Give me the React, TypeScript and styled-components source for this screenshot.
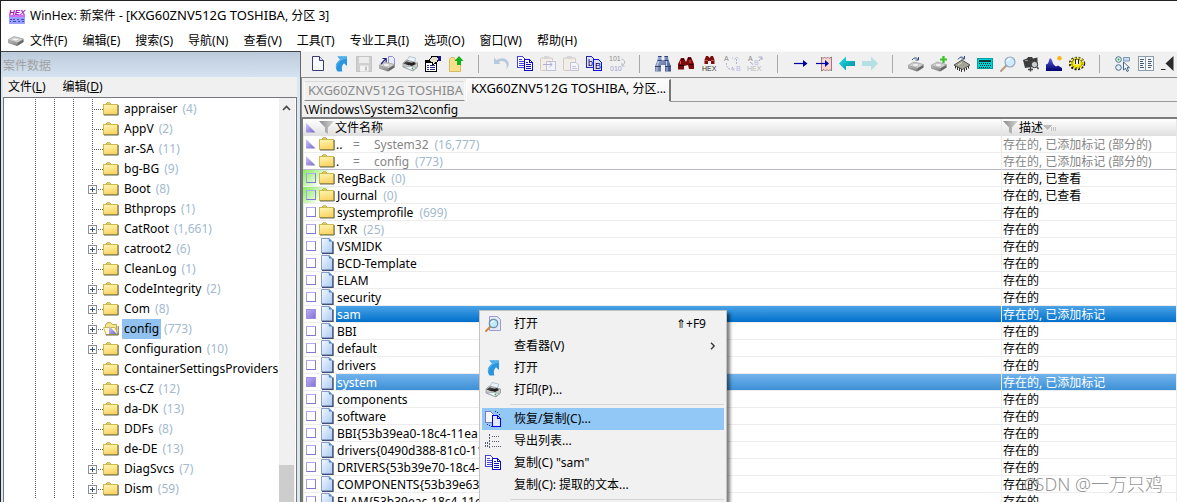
import React from "react";
import styled, { createGlobalStyle, css } from "styled-components";

const GlobalStyle = createGlobalStyle`
  *, *::before, *::after { box-sizing: border-box; }
  body { margin: 0; overflow: hidden; background: #f0f0f0; }
  body, button, table {
    font-family: "Noto Sans", "Noto Sans CJK SC", sans-serif;
    font-size: 12px;
    line-height: 16px;
    color: #000;
  }
  svg { display: block; flex: none; overflow: visible; }
`;

/* ---------- window frame ---------- */

const Window = styled.div`
  position: relative;
  display: flex;
  flex-direction: column;
  height: 100vh;
  overflow: hidden;
  border-top: 1px solid #222;
  border-left: 1px solid #222;
  background: #f0f0f0;
  white-space: nowrap;
`;

const TitleBar = styled.header`
  display: flex;
  align-items: center;
  gap: 5px;
  height: 29px;
  padding-left: 8px;
  background: #fff;
`;

const Title = styled.h1`
  margin: 0;
  font-size: 12px;
  font-weight: 400;
`;

const Drive = styled.span`
  font-size: 13px;
`;

const MenuBar = styled.nav`
  display: flex;
  align-items: center;
  height: 21px;
  padding-left: 7px;
  background: #fff;
`;

const MenuButtons = styled.div`
  display: flex;
  gap: 15px;
  padding-left: 5px;
`;

const TextButton = styled.button`
  padding: 0;
  border: 0;
  background: none;
`;

const Body = styled.div`
  display: flex;
  flex: 1;
  min-height: 0;
`;

/* ---------- case data panel ---------- */

const CasePanel = styled.aside`
  display: flex;
  flex-direction: column;
  flex: none;
  width: 300px;
  padding: 0 3px 0 2px;
  border-top: 1px solid #444;
  border-right: 1px solid #666;
  background: #dbe6f3;
`;

const Caption = styled.h2`
  flex: none;
  height: 25px;
  margin: 0 -3px 0 -2px;
  padding: 6px 0 0 2px;
  font-size: 12px;
  font-weight: 400;
  color: #a2a2a2;
  background: linear-gradient(#bccbdb, #d5e2f2);
`;

const PanelMenu = styled.nav`
  display: flex;
  flex: none;
  align-items: center;
  gap: 17px;
  height: 20px;
  padding-left: 5px;
  background: #f0f0f0;
`;

const TreeFrame = styled.div`
  display: flex;
  flex: 1;
  min-height: 0;
  border: solid #74777c;
  border-width: 1px 1px 0 1px;
  background: #fff;
`;

const Tree = styled.ul`
  flex: 1;
  min-width: 0;
  margin: 0;
  padding: 1px 0 0 31px;
  overflow: hidden;
  list-style: none;
`;

const TreeRow = styled.li`
  display: flex;
  height: 20px;
`;

const dottedDown = "repeating-linear-gradient(#5f5f5f 0 1px, transparent 1px 2px) 0 0 / 1px 100% no-repeat";

const Guide = styled.span`
  flex: none;
  width: 19px;
  background: ${dottedDown};
`;

const Branch = styled.span`
  position: relative;
  flex: none;
  width: 11px;
  background: ${dottedDown};

  &::after {
    content: "";
    display: block;
    height: 1px;
    margin-top: 10px;
    background: repeating-linear-gradient(90deg, #5f5f5f 0 1px, transparent 1px 2px);
  }
`;

const Expander = styled.button`
  position: absolute;
  top: 6px;
  left: -4px;
  width: 9px;
  height: 9px;
  padding: 0;
  border: 0;
  background: none;
`;

const TreeIcon = styled.span`
  flex: none;
  width: 19px;
  padding-top: 3px;
`;

const TreeLabel = styled.span<{ $selected?: boolean }>`
  flex: none;
  padding: 2px;
  background: ${(p) => (p.$selected ? "#91c1ee" : "none")};
`;

const Count = styled.span`
  color: #a3b9cf;
`;

const TreeCount = styled(Count)`
  padding: 2px 0 0 3px;
`;

const ScrollBar = styled.div`
  display: flex;
  flex-direction: column;
  justify-content: space-between;
  flex: none;
  width: 17px;
  border-right: 1px solid #fff;
  background: #f0f0f0;
`;

const ScrollUp = styled.button`
  display: flex;
  align-items: center;
  justify-content: center;
  height: 20px;
  padding: 0 2px 0 0;
  border: 0;
  background: none;
`;

const ScrollThumb = styled.div`
  width: 15px;
  height: 37px;
  background: #cdcdcd;
`;

/* ---------- main area ---------- */

const Main = styled.main`
  display: flex;
  flex-direction: column;
  flex: 1;
  min-width: 0;
`;

const Toolbar = styled.div`
  display: flex;
  flex: none;
  height: 27px;
  padding-left: 5px;
  overflow: hidden;
  border-top: 1px solid #fafafa;
  border-bottom: 1px solid #8c8c8c;
`;

const ToolButton = styled.button`
  flex: none;
  width: 23px;
  padding: 0 3px 2px 4px;
  border: 0;
  background: none;
`;

const ToolSeparator = styled.span`
  flex: none;
  width: 1px;
  height: 18px;
  margin: 3px 11px;
  background: #a9a9a9;
`;

const TabStrip = styled.div`
  display: flex;
  flex: none;
  align-items: flex-end;
  height: 24px;
  border-left: 1px solid #8c8c8c;
`;

const Tab = styled.button<{ $active?: boolean }>`
  flex: none;
  border: 1px solid;
  text-align: left;
  ${(p) =>
    p.$active
      ? css`
          width: 205px;
          height: 23px;
          padding: 0 0 6px 4px;
          border-color: #fff #777 #f0f0f0 #fff;
          border-right-width: 2px;
          background: linear-gradient(#fcfcfc, #f0f0f0);
        `
      : css`
          width: 161px;
          height: 20px;
          margin: 0 1px 1px 2px;
          padding: 0 0 1px 3px;
          border-color: #dcdcdc #fafafa #8c8c8c #fafafa;
          color: #8a8a8a;
          background: #f0f0f0;
        `}
`;

const TabFill = styled.span`
  flex: 1;
  height: 23px;
  border-bottom: 1px solid #999;
`;

const PathRow = styled.div`
  flex: none;
  height: 17px;
  padding-left: 2px;
  border-bottom: 2px solid #7d7d7d;
  border-left: 1px solid #8c8c8c;
  line-height: 16px;
`;

const Listing = styled.div`
  flex: 1;
  min-height: 0;
  overflow: hidden;
  border-left: 2px solid #777;
  background: #fff;
`;

const FileTable = styled.table`
  width: 100%;
  table-layout: fixed;
  border-collapse: separate;
  border-spacing: 0;

  th, td { height: 17px; padding: 0; overflow: hidden; }
`;

const MarkCol = styled.col`
  width: 33px;
`;

const DescCol = styled.col`
  width: 175px;
`;

const HeadCell = styled.th`
  font-weight: 400;
  text-align: left;
  border-right: 1px solid #e8e8e8;
  background: linear-gradient(#fff, #dfdfdf);
`;

const HeadInner = styled.span<{ $pad: number }>`
  display: flex;
  align-items: center;
  height: 17px;
  padding-left: ${(p) => p.$pad}px;
`;

const HeadIcon = styled.span<{ $width: number }>`
  width: ${(p) => p.$width}px;
`;

type Tone = "plain" | "parent" | "strong" | "soft";

const fills: Record<Tone, string> = {
  plain: "none",
  parent: "none",
  strong: "linear-gradient(#4ba3e6, #0070cb)",
  soft: "linear-gradient(#72b3ec, #3d90d6)",
};

const inks: Record<Tone, string> = {
  plain: "#000",
  parent: "#858585",
  strong: "#fff",
  soft: "#fff",
};

const FileRow = styled.tr<{ $divider?: boolean }>`
  td { border-bottom: 1px solid ${(p) => (p.$divider ? "#b9b9c9" : "#ededed")}; }
`;

const MarkCell = styled.td<{ $viewed?: boolean }>`
  background: ${(p) =>
    p.$viewed
      ? "linear-gradient(135deg, #84ee5c, #b9f39f 10px, #fff 22px)"
      : "linear-gradient(90deg, #d9f5cd 1px, #fff 1px)"};
`;

const MarkInner = styled.span`
  display: flex;
  align-items: center;
  height: 16px;
  padding-left: 3px;
`;

const MarkSlot = styled.span`
  display: flex;
  width: 13px;
`;

const Mark = styled.input`
  appearance: none;
  width: 10px;
  height: 10px;
  margin: 0;
  border: 1px solid;
  border-color: #b3aaf0 #8a80d2 #8178cc #a9a0ea;
  background: transparent;

  &:checked {
    border-color: #9d8fe2;
    background: linear-gradient(135deg, #b9adf2, #8672d8);
  }
`;

const ValueCell = styled.td<{ $tone: Tone; $pad: number }>`
  && {
    padding: 2px 0 0 ${(p) => p.$pad}px;
    line-height: 14px;
  }
  color: ${(p) => inks[p.$tone]};
  background: ${(p) => fills[p.$tone]};
  border-right: 1px solid #ededed;
`;

const NameText = styled.span`
  padding: 0 6px 0 1px;
`;

const Dots = styled.span`
  display: inline-block;
  width: 17px;
  color: #000;
`;

const Equals = styled.span`
  display: inline-block;
  width: 20px;
`;

/* ---------- context menu ---------- */

const ContextMenu = styled.ul`
  position: absolute;
  top: 309px;
  left: 478px;
  width: 248px;
  margin: 0;
  padding: 2px;
  border: 1px solid #c3c3c3;
  background: #f1f1f1;
  box-shadow: 3px 3px 3px rgba(0, 0, 0, 0.5);
  list-style: none;
`;

const MenuItem = styled.button<{ $hot?: boolean }>`
  display: flex;
  align-items: center;
  width: 100%;
  height: 22px;
  padding: 0 9px 0 3px;
  border: 0;
  text-align: left;
  background: ${(p) => (p.$hot ? "#91c8f6" : "none")};
`;

const MenuIcon = styled.span`
  width: 29px;
`;

const MenuLabel = styled.span`
  flex: 1;
`;

const Shortcut = styled.kbd`
  padding-right: 9px;
  font-family: inherit;
`;

const MenuRule = styled.li`
  height: 1px;
  margin: 3px 0 3px 28px;
  background: #d5d5d5;
`;

const Watermark = styled.div`
  position: absolute;
  right: 14px;
  bottom: 5px;
  font-size: 18px;
  font-weight: 300;
  line-height: 26px;
  color: rgba(120, 120, 120, 0.8);
  text-shadow: 1px 1px 0 rgba(255, 255, 255, 0.7);
  pointer-events: none;
`;

/* ---------- icons ---------- */

const Svg = ({ w = 16, h = 16, crisp, children }: { w?: number; h?: number; crisp?: boolean; children: React.ReactNode }) => (
  <svg width={w} height={h} viewBox={`0 0 ${w} ${h}`} fill="none" shapeRendering={crisp ? "crispEdges" : "auto"} aria-hidden="true">
    {children}
  </svg>
);

const DefsSvg = styled.svg`
  position: absolute;
`;

const Defs = () => (
  <DefsSvg width="0" height="0" aria-hidden="true">
    <defs>
      <linearGradient id="gFolder" x1="0" y1="0" x2="0.3" y2="1">
        <stop offset="0" stopColor="#fff8b4" />
        <stop offset="1" stopColor="#fbd465" />
      </linearGradient>
      <linearGradient id="gFile" x1="0" y1="0" x2="1" y2="1">
        <stop offset="0" stopColor="#f4f8ff" />
        <stop offset="1" stopColor="#a9c9f3" />
      </linearGradient>
      <linearGradient id="gMark" x1="0" y1="0" x2="1" y2="1">
        <stop offset="0" stopColor="#cfc8f8" />
        <stop offset="1" stopColor="#7466cc" />
      </linearGradient>
      <linearGradient id="gFunnel" x1="0" y1="0" x2="1" y2="0">
        <stop offset="0" stopColor="#8c8c8c" />
        <stop offset="1" stopColor="#d4d4d4" />
      </linearGradient>
      <linearGradient id="gTeal" x1="0" y1="0" x2="1" y2="1">
        <stop offset="0" stopColor="#1fe0e6" />
        <stop offset="1" stopColor="#008a9c" />
      </linearGradient>
      <linearGradient id="gSteel" x1="0" y1="0" x2="0" y2="1">
        <stop offset="0" stopColor="#f2f2f2" />
        <stop offset="1" stopColor="#777" />
      </linearGradient>
      <linearGradient id="gScope" x1="0" y1="0" x2="1" y2="1">
        <stop offset="0" stopColor="#a9b8dc" />
        <stop offset="1" stopColor="#3b4f86" />
      </linearGradient>
      <linearGradient id="gHill" x1="0" y1="0" x2="0" y2="1">
        <stop offset="0" stopColor="#5a5adc" />
        <stop offset="1" stopColor="#00006e" />
      </linearGradient>
    </defs>
  </DefsSvg>
);

const Folder = () => (
  <Svg h={14}>
    <path d="M2.5 3 L4 .8 H7 L8 2.5 V4 H2Z" fill="#f1df6d" stroke="#b9a94a" />
    <rect x=".5" y="2.5" width="14" height="10" fill="url(#gFolder)" stroke="#cbb84f" />
    <path d="M15.2 3 V13 H1" stroke="#66664a" />
  </Svg>
);

const OpenFolder = () => (
  <Svg h={14}>
    <path d="M2.5 12 V3 L4 .8 H8 L9.5 2.5 H13.5 V12Z" fill="#f4e88a" stroke="#b9a94a" />
    <path d="M.5 5.5 H12 L15 12.5 H3Z" fill="#fffbd0" stroke="#cbb84f" />
    <path d="M6 4 V12 H14Z" fill="url(#gMark)" />
    <path d="M15.2 4 V13 H3" stroke="#66664a" />
  </Svg>
);

const FileIcon = () => (
  <Svg>
    <path d="M2.5 .5 H10.5 L13.5 4 V15 H2.5Z" fill="url(#gFile)" stroke="#8a9dc4" />
    <path d="M14 3.5 V15.5 H3" stroke="#3f4f78" strokeWidth="1.4" />
    <path d="M9.5 .5 L13 3.5 H10.2Z" fill="#2b7fd0" />
  </Svg>
);

const Triangle = () => (
  <Svg w={10} h={10}>
    <path d="M0 0 V9.5 H9.5Z" fill="url(#gMark)" />
  </Svg>
);

const Funnel = () => (
  <Svg w={15} h={13}>
    <path d="M0 0 H15 L9 6.5 V13 L6 11 V6.5Z" fill="url(#gFunnel)" />
  </Svg>
);

const SortMark = () => (
  <Svg w={13} h={7} crisp>
    <path d="M0 1 H9 L4.5 6Z" fill="#bdbdbd" />
    <path d="M8.5 3 V7 M10.5 3 V7 M12.5 3 V7" stroke="#c4c4c4" />
  </Svg>
);

const AppIcon = () => (
  <Svg>
    <rect x="0" y="7" width="16" height="9" fill="#9aa0fb" />
    <rect x="0" y="7" width="16" height="2" fill="#d36cf0" />
    <text x="0" y="7" fontSize="8" fontWeight="700" fontStyle="italic" fontFamily="Liberation Sans" fill="#a613b8">HEX</text>
    <path d="M1 11.5 H3 M4 11.5 H6 M8 11.5 H10 M12 11.5 H15 M1 13.5 H2 M4 13.5 H7 M9 13.5 H11 M13 13.5 H15" stroke="#3c46c8" />
  </Svg>
);

const DiskShape = () => (
  <>
    <path d="M0 9.5 L6 6 L15.5 8.5 V11.5 L9 15.5 L0 12.5Z" fill="url(#gSteel)" />
    <path d="M0 9.5 L6 6 L15.5 8.5 L9.5 12.3Z" fill="#d3d3d3" stroke="#8d8d8d" strokeWidth=".6" />
    <ellipse cx="7.5" cy="9" rx="3.4" ry="1.4" fill="#f8f8f8" stroke="#a9a9a9" strokeWidth=".6" />
    <path d="M9.5 15.3 L15.5 11.6 V9 L9.5 12.5Z" fill="#666" />
  </>
);

const MenuDisk = () => (
  <Svg w={17} h={10}>
    <g transform="translate(0 -5.5)"><DiskShape /></g>
  </Svg>
);

const PrinterShape = () => (
  <>
    <path d="M5 5 L7 0.5 L13.5 2 L12.5 7Z" fill="#eaf4fb" stroke="#9fb4c4" strokeWidth=".7" />
    <path d="M1 7 L4.5 4 L15.5 7 V11 L11 15 L1 11Z" fill="#c9c9c9" stroke="#868686" strokeWidth=".7" />
    <path d="M1.5 7.5 L4.5 5.2 L9 6.5 L7 9.5Z" fill="#3f3f3f" />
    <path d="M4 8 L12 6 L14 8 L10 10Z" fill="#222" />
    <path d="M2 11 L10 14.5 L14.5 11.8 L9 10.5Z" fill="#f7fbff" stroke="#8a9aa6" strokeWidth=".6" />
    <circle cx="10.5" cy="12.5" r=".9" fill="#3fae49" />
  </>
);

const BlueArrow = () => (
  <Svg>
    <path d="M4.5 .5 H14 V10 L11 7.3 C8.6 9.3 8.5 12.4 9.3 15.5 H4.5 C1.2 10.5 3.3 6.5 7.3 3.7Z" fill="#2a94dd" />
    <path d="M4.5 .5 H14 V2.5 L8.5 4.5 C4.5 7 3.6 10 4 13 C1.5 9 3.5 6.1 7.3 3.7Z" fill="#4fb0ee" />
  </Svg>
);

const CopyPages = () => (
  <Svg crisp>
    <path d="M.5 .5 H5.5 L8.5 3.5 V11.5 H.5Z" fill="#fff" stroke="#4343e4" />
    <path d="M2 3.5 H5 M2 5.5 H7 M2 7.5 H7 M2 9.5 H7" stroke="#4343e4" />
    <path d="M7.5 3.5 H12.5 L15.5 6.5 V14.5 H7.5Z" fill="#fff" stroke="#0d0dc4" />
    <path d="M12.5 3.5 V6.5 H15.5" stroke="#0d0dc4" />
    <path d="M9 6.5 H11 M9 8.5 H14 M9 10.5 H14 M9 12.5 H14" stroke="#0d0dc4" />
  </Svg>
);

const RecoverPages = () => (
  <Svg crisp>
    <path d="M.5 .5 H5.5 L8.5 3.5 V11.5 H.5Z" fill="#f5f6ff" stroke="#7a7ac0" />
    <path d="M7.5 4.5 H12.5 L15.5 7.5 V15.5 H7.5Z" fill="#dfe8ff" stroke="#0000f0" />
    <path d="M12.5 4.5 V7.5 H15.5" stroke="#0000f0" />
    <path d="M10 .5 H11 M12 1.5 H13 M14 3.5 H15 M2 13.5 H3 M4 14.5 H5 M6 15.5 H7" stroke="#2525c0" />
  </Svg>
);

const Magnifier = () => (
  <>
    <path d="M6.3 9.5 L1 15" stroke="#b99a86" strokeWidth="2" strokeLinecap="round" />
    <circle cx="10" cy="6" r="5" fill="#cfeaff" stroke="#8fa9c4" strokeWidth="1.2" />
    <path d="M7 5 Q8 2.6 10.5 2.8" stroke="#fff" strokeWidth="1.2" />
  </>
);

const ViewPage = () => (
  <Svg>
    <path d="M4.5 .5 H12 L15.5 3.5 V14.5 H4.5Z" fill="#e6e8fb" stroke="#9a9ad8" />
    <path d="M5 11 L1 15" stroke="#d0853c" strokeWidth="2" strokeLinecap="round" />
    <circle cx="8.5" cy="7.5" r="4.2" fill="#bfeaf7" stroke="#6e8fa8" strokeWidth="1.3" />
    <path d="M6 7 Q7 5 9 5" stroke="#fff" strokeWidth="1.2" />
  </Svg>
);

const ExportList = () => (
  <Svg crisp>
    <path d="M4.5 1 V15 M.5 9 V15 M2.5 9 V15" stroke="#555a78" strokeDasharray="2 1" />
    <path d="M7 3.5 H15 M7 8.5 H14 M7 13.5 H16" stroke="#555a78" strokeDasharray="1 1" />
  </Svg>
);

const Binoculars = () => (
  <>
    <path d="M3 0 H6.5 V4 H9.5 V0 H13 L13.5 4 L16 10 V15.5 H10 V9 H6 V15.5 H0 V10 L2.5 4Z" fill="url(#gScope)" />
    <path d="M3 .5 H6.5 M9.5 .5 H13 M2.5 4.5 H6.5 M9.5 4.5 H13.5 M0 10.5 H6 M10 10.5 H16" stroke="#2f4173" />
    <path d="M3.8 5 L2 10 M11.5 5 V10 M2 11 V15 M12 11 V15" stroke="#fff" strokeOpacity=".6" />
  </>
);

const Tiny = ({ x, y, fill, size = 7, children }: { x: number; y: number; fill: string; size?: number; children: string }) => (
  <text x={x} y={y} fontSize={size} fontFamily="Liberation Sans" fill={fill}>{children}</text>
);

type Tool = { label: string; icon: React.ReactNode } | null;

const tools: Tool[] = [
  { label: "新建", icon: <Svg><path d="M2.5 .5 H9.5 L13.5 4.5 V14.5 H2.5Z" fill="#f8f9ff" stroke="#3a3a78" /><path d="M9.5 .5 V4.5 H13.5" fill="#dfe0f4" stroke="#3a3a78" /></Svg> },
  { label: "打开", icon: <BlueArrow /> },
  { label: "保存", icon: <Svg><path d="M.5 .5 H15.5 V15.5 H.5Z" fill="#cfcfcf" stroke="#c4c4c4" /><rect x="3" y="1" width="10" height="6" fill="#ececec" /><rect x="4" y="9.5" width="8.5" height="6" fill="#f1f1f1" /><rect x="9" y="10.5" width="2" height="4" fill="#c4c4c4" /></Svg> },
  { label: "磁盘镜像", icon: <Svg><path d="M9.5 .5 H13.5 L15.5 2.5 V10 H9.5Z" fill="#e9ebff" stroke="#8e92cc" /><DiskShape /><path d="M2 8 L7 2.5 M3.5 2.5 H7.2 V6" stroke="#24248c" strokeWidth="1.2" /></Svg> },
  { label: "打印", icon: <Svg><PrinterShape /></Svg> },
  { label: "属性", icon: <Svg crisp><path d="M.5 4.5 H11.5 V15.5 H.5Z" fill="#fff" stroke="#000" /><path d="M1 6 H8" stroke="#000" strokeWidth="2" /><path d="M2 9.5 H4 M5 9.5 H10 M2 11.5 H4 M5 11.5 H10 M2 13.5 H4 M5 13.5 H10" stroke="#2a2a8c" /><path d="M4.5 3.5 L7 .5 H12 L14 3 L12 6 L8 9 L7 6.5 L5 5.5Z" fill="#e9e0cf" stroke="#000" /><path d="M13 0 H16 V5 H13Z" fill="#16168a" /></Svg> },
  { label: "添加文件夹", icon: <Svg><path d="M1.5 3.5 L3 1.5 H6 L7 3.5 H12.5 V15.5 H1.5Z" fill="#fbe08b" stroke="#d9b95c" /><path d="M11 0 L15.5 5 H13 V9 H9 V5 H6.5Z" fill="#12b21c" /></Svg> },
  null,
  { label: "撤销", icon: <Svg><path d="M0 1.5 V8 H6.5 L4.5 5.9 Q10 3.5 12 7.5 T11 14.5 Q17 9 13.3 4.3 Q9 .5 2.5 3.9Z" fill="#b9c9dd" /></Svg> },
  { label: "复制扇区", icon: <CopyPages /> },
  { label: "粘贴", icon: <Svg><rect x=".5" y="2" width="12" height="12.5" rx="1" fill="#f2ede7" stroke="#d4cbc2" /><rect x="4" y="0" width="5" height="3" fill="#d6d6d6" /><rect x="6.5" y="5.5" width="9" height="9" fill="#f2f2fa" stroke="#c3c3d8" /><path d="M3 8.5 H12 M9.5 6 L12.2 8.5 L9.5 11" stroke="#b0b0cc" /></Svg> },
  { label: "写入剪贴板", icon: <Svg><rect x=".5" y="2" width="12" height="12.5" rx="1" fill="#f2ede7" stroke="#d4cbc2" /><rect x="4" y="0" width="5" height="3" fill="#d6d6d6" /><path d="M7.5 6.5 H13 L15.5 9 V14.5 H7.5Z" fill="#f4f4fb" stroke="#c3c3d8" /><path d="M9 10.5 H13 M9 12.5 H14" stroke="#c3c3d8" /></Svg> },
  { label: "复制十六进制", icon: <Svg><g shapeRendering="crispEdges"><path d="M.5 .5 H5.5 L8.5 3.5 V11.5 H.5Z" fill="#dfe0ff" stroke="#2525b8" /><path d="M7.5 3.5 H12.5 L15.5 6.5 V14.5 H7.5Z" fill="#dfe0ff" stroke="#1010f0" /></g><Tiny x={2} y={10} size={9} fill="#000050">b</Tiny><Tiny x={9} y={13} size={9} fill="#000050">B</Tiny></Svg> },
  { label: "转换", icon: <Svg><Tiny x={0} y={5} fill="#8d8d8d">101</Tiny><Tiny x={1} y={14.5} fill="#a4a4d2">010</Tiny><path d="M12.5 3 Q16.5 4 15.5 7.5 L13 9.5 M13 7 V10 H15.5" stroke="#b9b9c4" /></Svg> },
  null,
  { label: "查找文本", icon: <Svg><Binoculars /></Svg> },
  { label: "查找", icon: <Svg><path d="M3 2 H6 L8 6 L10 1 H13 L16 8 V13 H11 L10 9 L6 10 V13.5 H0 V8Z" fill="#7d0c0c" /><path d="M3 3.5 H6 M10 2.5 H13 M1 9.5 H6 M11 8.5 H15" stroke="#1f0000" /><path d="M2.5 5 V8 M12 4 V7" stroke="#e05454" /></Svg> },
  { label: "查找十六进制", icon: <Svg><path d="M5 0 H7 L8.5 2 L10 0 H12 L13.5 4 V8 H10 V5 H7 V8 H3.5 V4Z" fill="#7d0c0c" /><path d="M4 4.5 H7 M10 4.5 H13" stroke="#c85050" /><Tiny x={1} y={15} fill="#333">HEX</Tiny></Svg> },
  { label: "替换文本", icon: <Svg><Tiny x={0} y={5} fill="#8a8a8a">A</Tiny><Tiny x={12} y={15} fill="#b9b9e2">B</Tiny><path d="M2.5 7 V10 L5 13 H10 M8 11 L10.5 13 L8 15 M8 2 H9 M12.5 8 V2 M10.5 3.5 L12.7 1 L15 3.5" stroke="#b0b0d8" strokeDasharray="2 1" /></Svg> },
  { label: "替换十六进制", icon: <Svg><Tiny x={1} y={5} fill="#8a8a8a">A</Tiny><Tiny x={7} y={9} fill="#b9b9e2">B</Tiny><path d="M3 6 L6 8.5 M12 5 L14.5 1.5 M11.5 1 H15 V4" stroke="#a9a9c8" /><Tiny x={0} y={15} fill="#b9b9b9">HEX</Tiny></Svg> },
  null,
  { label: "转到偏移", icon: <Svg><path d="M1 7.5 H13" stroke="#0000a8" strokeWidth="1.2" /><path d="M10 4 L14.5 7.5 L10 11Z" fill="#0000a8" /></Svg> },
  { label: "转到扇区", icon: <Svg><path d="M5.5 1 L7 2.5 L8.5 1 L10 2.5 L11.5 1 L13 2.5 L15.5 1 V15 L14 13.5 L12.5 15 L11 13.5 L9.5 15 L8 13.5 L5.5 15Z" fill="#f8d5d2" stroke="#8f7272" strokeWidth=".9" /><path d="M0 7.5 H10" stroke="#0000a8" strokeWidth="1.2" /><path d="M9 4 L13 7.5 L9 11Z" fill="#0000a8" /></Svg> },
  { label: "后退", icon: <Svg><path d="M0 7.5 L7 .5 V5 H16 V10 H7 V14.5Z" fill="url(#gTeal)" /></Svg> },
  { label: "前进", icon: <Svg><path d="M16 7.5 L9 .5 V5 H0 V10 H9 V14.5Z" fill="#b4e0e4" /></Svg> },
  null,
  { label: "打开磁盘", icon: <Svg><DiskShape /><path d="M4 4 Q7 0 10 3.5 M10.5 1 V4 H7.5" stroke="#2f4a80" /></Svg> },
  { label: "添加磁盘", icon: <Svg><DiskShape /><path d="M12.5 0 V7 M9 3.5 H16" stroke="#36c423" strokeWidth="2.2" /></Svg> },
  { label: "内存", icon: <Svg><path d="M0 9 L8 4 L16 9 L8.5 13.5Z" fill="#a3a396" stroke="#3a3a34" strokeWidth=".8" /><path d="M1.5 10 V12.5 M3.5 11 V14 M5.5 12 V15 M7.5 13 V16 M10.5 12.5 V15.5 M12.5 11.5 V14 M14.5 10 V12.5" stroke="#333" /><path d="M4 9 L8 6.5" stroke="#dcdcd0" /><path d="M4 3.5 Q7 -1 10 2.5 M10.5 0 V3 H7.5" stroke="#2f4a80" /></Svg> },
  { label: "计算器", icon: <Svg crisp><rect x=".5" y="2.5" width="15" height="10" fill="#00d2d6" stroke="#00a0a4" /><rect x="2" y="4" width="12" height="2" fill="#083c3c" /><path d="M2 7.5 H14 M3 9.5 H14 M2 11.5 H14" stroke="#002828" strokeDasharray="1 1" /></Svg> },
  { label: "查看", icon: <Svg><Magnifier /></Svg> },
  { label: "快照", icon: <Svg><path d="M0 4 L4 2.5 L5 1 H9 L10 2.5 L14.5 1.5 V10 L2 12Z" fill="#3d3d3d" /><path d="M2 4.5 H5" stroke="#999" /><circle cx="11.5" cy="8.5" r="3.2" fill="#c9d0d4" stroke="#333" /><path d="M7.5 10 V15.5 M5 13.5 H10 M14 11 L15.5 13" stroke="#444" strokeWidth="1.4" /></Svg> },
  { label: "图库", icon: <Svg><path d="M0 15 V8 Q2 9 3 4.5 T6 4.5 Q7 9 10 10.5 L12 9.5 L16 12 V15Z" fill="url(#gHill)" /><circle cx="13.5" cy="2.2" r="2.2" fill="#f7b21c" /></Svg> },
  { label: "选项", icon: <Svg><ellipse cx="8" cy="7.5" rx="7" ry="5.6" stroke="#1c1800" strokeWidth="2.4" strokeDasharray="2 1.4" /><ellipse cx="8" cy="7.5" rx="5.2" ry="4.2" fill="#f3e600" stroke="#6b6200" strokeWidth=".8" /><ellipse cx="8" cy="7" rx="6.4" ry="5" stroke="#f0e300" strokeWidth="1.6" strokeDasharray="1.8 1.6" /><path d="M5.5 4 H10.5 V8.5 H5.5Z" fill="#f4f4f4" /><path d="M6.5 3 V8 M9.5 3 V8" stroke="#222" /></Svg> },
  null,
  { label: "选择方式", icon: <Svg><circle cx="3.5" cy="3.5" r="2.8" fill="#e8f6ee" stroke="#4a6f8c" /><circle cx="3.5" cy="3.5" r="1" fill="#2d9a4a" /><circle cx="3.5" cy="11.5" r="2.8" fill="#e6eef8" stroke="#4a6f8c" /><path d="M8.5 1.5 H14.5 V5 H8.5Z" fill="#c9d9ea" stroke="#7c98b8" /><path d="M8.5 6 V14 L10.5 12.3 L12 15.5 L13.5 14.8 L12 11.7 H14.5Z" fill="#fff" stroke="#3f668e" /></Svg> },
  { label: "双栏视图", icon: <Svg crisp><rect x=".5" y=".5" width="15" height="14" fill="#f4f6f8" stroke="#8d9db0" /><path d="M7.5 1 V15" stroke="#8d9db0" /><path d="M2 3.5 H6 M2 5.5 H5 M2 7.5 H6 M2 9.5 H5 M2 11.5 H6 M10 3.5 H13 M10 5.5 H14 M10 7.5 H13 M10 9.5 H14 M10 11.5 H13" stroke="#4b5b6d" /></Svg> },
  { label: "上一项", icon: <Svg><path d="M12.5 0 V15 L4.5 7.5Z" fill="#2b2b2b" /><path d="M0 13.5 H4.5" stroke="#2b2b2b" /></Svg> },
];

/* ---------- data ---------- */

const menus = ["文件(F)", "编辑(E)", "搜索(S)", "导航(N)", "查看(V)", "工具(T)", "专业工具(I)", "选项(O)", "窗口(W)", "帮助(H)"];

const treeRows: { name: string; count?: string; plus?: boolean; selected?: boolean }[] = [
  { name: "appraiser", count: "(4)" },
  { name: "AppV", count: "(2)" },
  { name: "ar-SA", count: "(11)" },
  { name: "bg-BG", count: "(9)" },
  { name: "Boot", count: "(8)", plus: true },
  { name: "Bthprops", count: "(1)" },
  { name: "CatRoot", count: "(1,661)", plus: true },
  { name: "catroot2", count: "(6)", plus: true },
  { name: "CleanLog", count: "(1)" },
  { name: "CodeIntegrity", count: "(2)", plus: true },
  { name: "Com", count: "(8)", plus: true },
  { name: "config", count: "(773)", plus: true, selected: true },
  { name: "Configuration", count: "(10)", plus: true },
  { name: "ContainerSettingsProviders" },
  { name: "cs-CZ", count: "(12)" },
  { name: "da-DK", count: "(13)" },
  { name: "DDFs", count: "(8)" },
  { name: "de-DE", count: "(13)" },
  { name: "DiagSvcs", count: "(7)", plus: true },
  { name: "Dism", count: "(59)", plus: true },
];

type Entry = {
  name: string;
  count?: string;
  kind: "up" | "dir" | "file";
  dots?: string;
  desc: string;
  tone?: Tone;
  viewed?: boolean;
};

const entries: Entry[] = [
  { kind: "up", dots: "..", name: "System32", count: "(16,777)", desc: "存在的, 已添加标记 (部分的)", tone: "parent" },
  { kind: "up", dots: ".", name: "config", count: "(773)", desc: "存在的, 已添加标记 (部分的)", tone: "parent" },
  { kind: "dir", name: "RegBack", count: "(0)", desc: "存在的, 已查看", viewed: true },
  { kind: "dir", name: "Journal", count: "(0)", desc: "存在的, 已查看", viewed: true },
  { kind: "dir", name: "systemprofile", count: "(699)", desc: "存在的" },
  { kind: "dir", name: "TxR", count: "(25)", desc: "存在的" },
  { kind: "file", name: "VSMIDK", desc: "存在的" },
  { kind: "file", name: "BCD-Template", desc: "存在的" },
  { kind: "file", name: "ELAM", desc: "存在的" },
  { kind: "file", name: "security", desc: "存在的" },
  { kind: "file", name: "sam", desc: "存在的, 已添加标记", tone: "strong" },
  { kind: "file", name: "BBI", desc: "存在的" },
  { kind: "file", name: "default", desc: "存在的" },
  { kind: "file", name: "drivers", desc: "存在的" },
  { kind: "file", name: "system", desc: "存在的, 已添加标记", tone: "soft" },
  { kind: "file", name: "components", desc: "存在的" },
  { kind: "file", name: "software", desc: "存在的" },
  { kind: "file", name: "BBI{53b39ea0-18c4-11ea", desc: "存在的" },
  { kind: "file", name: "drivers{0490d388-81c0-11", desc: "存在的" },
  { kind: "file", name: "DRIVERS{53b39e70-18c4-11", desc: "存在的" },
  { kind: "file", name: "COMPONENTS{53b39e63", desc: "存在的" },
  { kind: "file", name: "ELAM{53b39eac-18c4-11ea", desc: "存在的" },
];

type Item = { label: string; icon?: React.ReactNode; keys?: string; sub?: boolean; hot?: boolean } | null;

const contextItems: Item[] = [
  { label: "打开", icon: <ViewPage />, keys: "⇑+F9" },
  { label: "查看器(V)", sub: true },
  { label: "打开", icon: <BlueArrow /> },
  { label: "打印(P)...", icon: <Svg><PrinterShape /></Svg> },
  null,
  { label: "恢复/复制(C)...", icon: <RecoverPages />, hot: true },
  { label: "导出列表...", icon: <ExportList /> },
  { label: "复制(C) \"sam\"", icon: <CopyPages /> },
  { label: "复制(C): 提取的文本..." },
  null,
];

export default function App() {
  return (
    <Window>
      <GlobalStyle />
      <Defs />
      <TitleBar>
        <AppIcon />
        <Title>WinHex: 新案件 - [<Drive>KXG60ZNV512G TOSHIBA</Drive>, 分区 3]</Title>
      </TitleBar>
      <MenuBar>
        <MenuDisk />
        <MenuButtons>
          {menus.map((m) => (
            <TextButton key={m}>{m}</TextButton>
          ))}
        </MenuButtons>
      </MenuBar>
      <Body>
        <CasePanel>
          <Caption>案件数据</Caption>
          <PanelMenu>
            <TextButton>文件(<u>L</u>)</TextButton>
            <TextButton>编辑(<u>D</u>)</TextButton>
          </PanelMenu>
          <TreeFrame>
            <Tree>
              {treeRows.map((r) => (
                <TreeRow key={r.name}>
                  <Guide />
                  <Guide />
                  <Guide />
                  <Branch>
                    {r.plus && (
                      <Expander aria-label={`展开 ${r.name}`}>
                        <Svg w={9} h={9} crisp>
                          <rect x=".5" y=".5" width="8" height="8" fill="#fdfdfd" stroke="#8f8f8f" />
                          <path d="M2 4.5 H7 M4.5 2 V7" stroke="#33508f" />
                        </Svg>
                      </Expander>
                    )}
                  </Branch>
                  <TreeIcon>{r.selected ? <OpenFolder /> : <Folder />}</TreeIcon>
                  <TreeLabel $selected={r.selected}>{r.name}</TreeLabel>
                  {r.count && <TreeCount>{r.count}</TreeCount>}
                </TreeRow>
              ))}
            </Tree>
            <ScrollBar>
              <ScrollUp aria-label="向上滚动">
                <Svg w={9} h={6}>
                  <path d="M1 5 L4.5 1.5 L8 5" stroke="#444" strokeWidth="1.6" />
                </Svg>
              </ScrollUp>
              <ScrollThumb />
            </ScrollBar>
          </TreeFrame>
        </CasePanel>
        <Main>
          <Toolbar>
            {tools.map((t, i) =>
              t ? (
                <ToolButton key={i} aria-label={t.label}>{t.icon}</ToolButton>
              ) : (
                <ToolSeparator key={i} />
              )
            )}
          </Toolbar>
          <TabStrip>
            <Tab><Drive>KXG60ZNV512G TOSHIBA</Drive></Tab>
            <Tab $active><Drive>KXG60ZNV512G TOSHIBA</Drive>, 分区...</Tab>
            <TabFill />
          </TabStrip>
          <PathRow>\Windows\System32\config</PathRow>
          <Listing>
            <FileTable>
              <colgroup>
                <MarkCol />
                <col />
                <DescCol />
              </colgroup>
              <thead>
                <tr>
                  <HeadCell colSpan={2}>
                    <HeadInner $pad={3}>
                      <HeadIcon $width={13}><Triangle /></HeadIcon>
                      <HeadIcon $width={16}><Funnel /></HeadIcon>
                      文件名称
                    </HeadInner>
                  </HeadCell>
                  <HeadCell>
                    <HeadInner $pad={1}>
                      <HeadIcon $width={16}><Funnel /></HeadIcon>
                      描述
                      <HeadIcon $width={16}><SortMark /></HeadIcon>
                    </HeadInner>
                  </HeadCell>
                </tr>
              </thead>
              <tbody>
                {entries.map((e, i) => {
                  const tone = e.tone ?? "plain";
                  return (
                    <FileRow key={i} $divider={e.dots === "."}>
                      <MarkCell $viewed={e.viewed}>
                        <MarkInner>
                          <MarkSlot>
                            {e.kind === "up" ? (
                              <Triangle />
                            ) : (
                              <Mark
                                type="checkbox"
                                aria-label={e.name}
                                defaultChecked={tone === "strong" || tone === "soft"}
                              />
                            )}
                          </MarkSlot>
                          {e.kind === "file" ? <FileIcon /> : <Folder />}
                        </MarkInner>
                      </MarkCell>
                      <ValueCell $tone={tone} $pad={0}>
                        {e.dots && (
                          <>
                            <Dots>{e.dots}</Dots>
                            <Equals>=</Equals>
                          </>
                        )}
                        <NameText>{e.name}</NameText>
                        {e.count && <Count>{e.count}</Count>}
                      </ValueCell>
                      <ValueCell $tone={tone} $pad={1}>{e.desc}</ValueCell>
                    </FileRow>
                  );
                })}
              </tbody>
            </FileTable>
          </Listing>
        </Main>
      </Body>
      <ContextMenu>
        {contextItems.map((it, i) =>
          it ? (
            <li key={i}>
              <MenuItem $hot={it.hot}>
                <MenuIcon>{it.icon}</MenuIcon>
                <MenuLabel>{it.label}</MenuLabel>
                {it.keys && <Shortcut>{it.keys}</Shortcut>}
                {it.sub && (
                  <Svg w={5} h={8}>
                    <path d="M1 .8 L4.2 4 L1 7.2" stroke="#333" strokeWidth="1.3" />
                  </Svg>
                )}
              </MenuItem>
            </li>
          ) : (
            <MenuRule key={i} role="separator" />
          )
        )}
      </ContextMenu>
      <Watermark>CSDN @一万只鸡</Watermark>
    </Window>
  );
}
